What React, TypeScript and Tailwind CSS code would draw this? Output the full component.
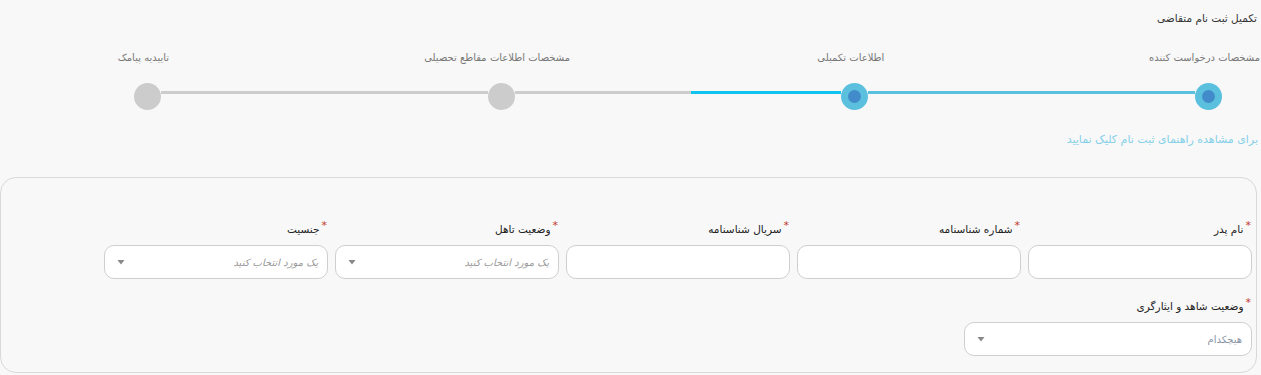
import React from 'react';

type Step = { title: string; state: 'done' | 'current' | 'todo' };

const STEPS: Step[] = [
  { title: 'مشخصات درخواست کننده', state: 'done' },
  { title: 'اطلاعات تکمیلی', state: 'current' },
  { title: 'مشخصات اطلاعات مقاطع تحصیلی', state: 'todo' },
  { title: 'تاییدیه پیامک', state: 'todo' },
];

const Caret = () => (
  <svg width="8" height="6" viewBox="0 0 8 6" className="shrink-0">
    <path d="M0.5 1 L7.5 1 L4 5.5 Z" fill="#888" />
  </svg>
);

const FieldLabel = ({ text }: { text: string }) => (
  <div className="flex items-start h-[16px] pr-[1px] text-[10.5px] leading-[16px] text-[#222]">
    <span className="text-[#c0392b] text-[11px] leading-[10px] ml-[2px]">*</span>
    <span>{text}</span>
  </div>
);

const TextField = ({ label }: { label: string }) => (
  <div className="w-[224px] flex flex-col gap-[8px]">
    <FieldLabel text={label} />
    <div className="h-[34px] bg-white border border-[#cfcfcf] rounded-[10px]" />
  </div>
);

const SelectField = ({ label, value, width = 'w-[224px]', valueClass = 'italic text-[#999]' }: { label: string; value: string; width?: string; valueClass?: string }) => (
  <div className={`${width} flex flex-col gap-[8px]`}>
    <FieldLabel text={label} />
    <div className="h-[34px] bg-white border border-[#cfcfcf] rounded-[10px] flex items-center justify-between pr-[9px] pl-[12px]">
      <span className={`text-[10px] ${valueClass}`}>{value}</span>
      <Caret />
    </div>
  </div>
);

const StepDot = ({ step }: { step: Step }) => (
  <div className="w-[27px] flex flex-col items-center shrink-0">
    <div className="h-[14px] leading-[14px] whitespace-nowrap text-[10px] text-[#777] mr-[8px]">{step.title}</div>
    <div
      className={`mt-[18px] w-[27px] h-[27px] rounded-full flex items-center justify-center ${
        step.state === 'todo' ? 'bg-[#cccccc]' : 'bg-[#5bc0de]'
      }`}
    >
      {step.state !== 'todo' && <div className="w-[13px] h-[13px] rounded-full bg-[#428bca]" />}
    </div>
  </div>
);

export default function App() {
  return (
    <div dir="rtl" className="min-h-[375px] bg-[#f8f8f8] font-['DejaVu_Sans',sans-serif] overflow-hidden">
      <div className="pt-[11px] pr-[4px] text-[10.5px] leading-[14px] text-[#333]">تکمیل ثبت نام متقاضی</div>

      {/* stepper */}
      <div className="mt-[26px] flex items-start pr-[39px] pl-[134px]">
        <StepDot step={STEPS[0]} />
        <div className="flex-1 h-[3px] mt-[40px] bg-[#5bc0de]" />
        <StepDot step={STEPS[1]} />
        <div className="flex-1 flex h-[3px] mt-[40px]">
          <div className="w-[150px] bg-[#0fc4ee]" />
          <div className="flex-1 bg-[#cccccc]" />
        </div>
        <StepDot step={STEPS[2]} />
        <div className="flex-1 h-[3px] mt-[40px] bg-[#cccccc]" />
        <StepDot step={STEPS[3]} />
      </div>

      <div className="mt-[23px] pr-[3px] text-[11px] leading-[14px] text-[#85d0e8]">برای مشاهده راهنمای ثبت نام کلیک نمایید</div>

      {/* form card */}
      <div className="mt-[30px] mr-[4px] ml-[0px] h-[196px] border-[1.5px] border-[#d9d9d9] rounded-[16px] pr-[4px] pt-[43px]">
        <div className="flex gap-[7px]">
          <TextField label="نام پدر" />
          <TextField label="شماره شناسنامه" />
          <TextField label="سریال شناسنامه" />
          <SelectField label="وضعیت تاهل" value="یک مورد انتخاب کنید" />
          <SelectField label="جنسیت" value="یک مورد انتخاب کنید" />
        </div>
        <div className="flex mt-[19px]">
          <SelectField label="وضعیت شاهد و ایثارگری" value="هیچکدام" width="w-[288px]" valueClass="text-[#8a94a6]" />
        </div>
      </div>
    </div>
  );
}
